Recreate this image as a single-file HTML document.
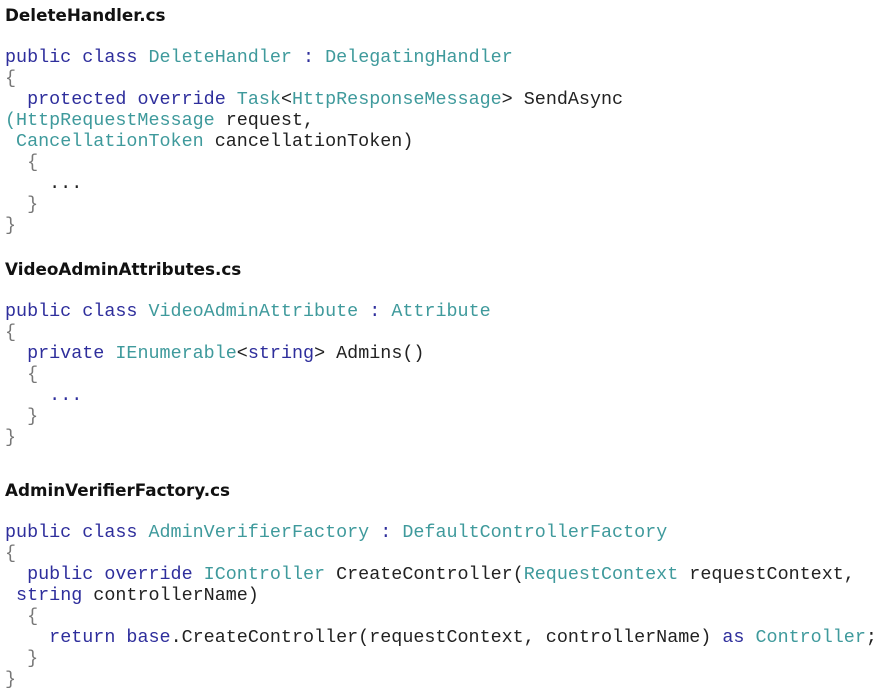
<!DOCTYPE html>
<html><head><style>
body{margin:0;background:#fff;width:885px;height:689px;overflow:hidden;position:relative}
h{position:absolute;left:5px;font:bold 16.8px "DejaVu Sans","Liberation Sans",sans-serif;color:#111;line-height:20px}
pre{position:absolute;left:5px;margin:0;font:18.4px/21px "Liberation Mono",monospace;color:#222}
.k{color:#2e2e9c}.t{color:#3f9a9c}.g{color:#777}
</style></head><body>
<h style="top:5px">DeleteHandler.cs</h>
<pre style="top:47px"><span class="k">public class</span> <span class="t">DeleteHandler</span> <span class="k">:</span> <span class="t">DelegatingHandler</span>
<span class="g">{</span>
  <span class="k">protected override</span> <span class="t">Task</span>&lt;<span class="t">HttpResponseMessage</span>&gt; SendAsync
<span class="t">(HttpRequestMessage</span> request,
 <span class="t">CancellationToken</span> cancellationToken)
  <span class="g">{</span>
    ...
  <span class="g">}</span>
<span class="g">}</span></pre>
<h style="top:259px">VideoAdminAttributes.cs</h>
<pre style="top:301px"><span class="k">public class</span> <span class="t">VideoAdminAttribute</span> <span class="k">:</span> <span class="t">Attribute</span>
<span class="g">{</span>
  <span class="k">private</span> <span class="t">IEnumerable</span>&lt;<span class="k">string</span>&gt; Admins()
  <span class="g">{</span>
    <span class="k">...</span>
  <span class="g">}</span>
<span class="g">}</span></pre>
<h style="top:480px">AdminVerifierFactory.cs</h>
<pre style="top:522px"><span class="k">public class</span> <span class="t">AdminVerifierFactory</span> <span class="k">:</span> <span class="t">DefaultControllerFactory</span>
<span class="g">{</span>
  <span class="k">public override</span> <span class="t">IController</span> CreateController(<span class="t">RequestContext</span> requestContext,
 <span class="k">string</span> controllerName)
  <span class="g">{</span>
    <span class="k">return base</span>.CreateController(requestContext, controllerName) <span class="k">as</span> <span class="t">Controller</span>;
  <span class="g">}</span>
<span class="g">}</span></pre>
</body></html>
